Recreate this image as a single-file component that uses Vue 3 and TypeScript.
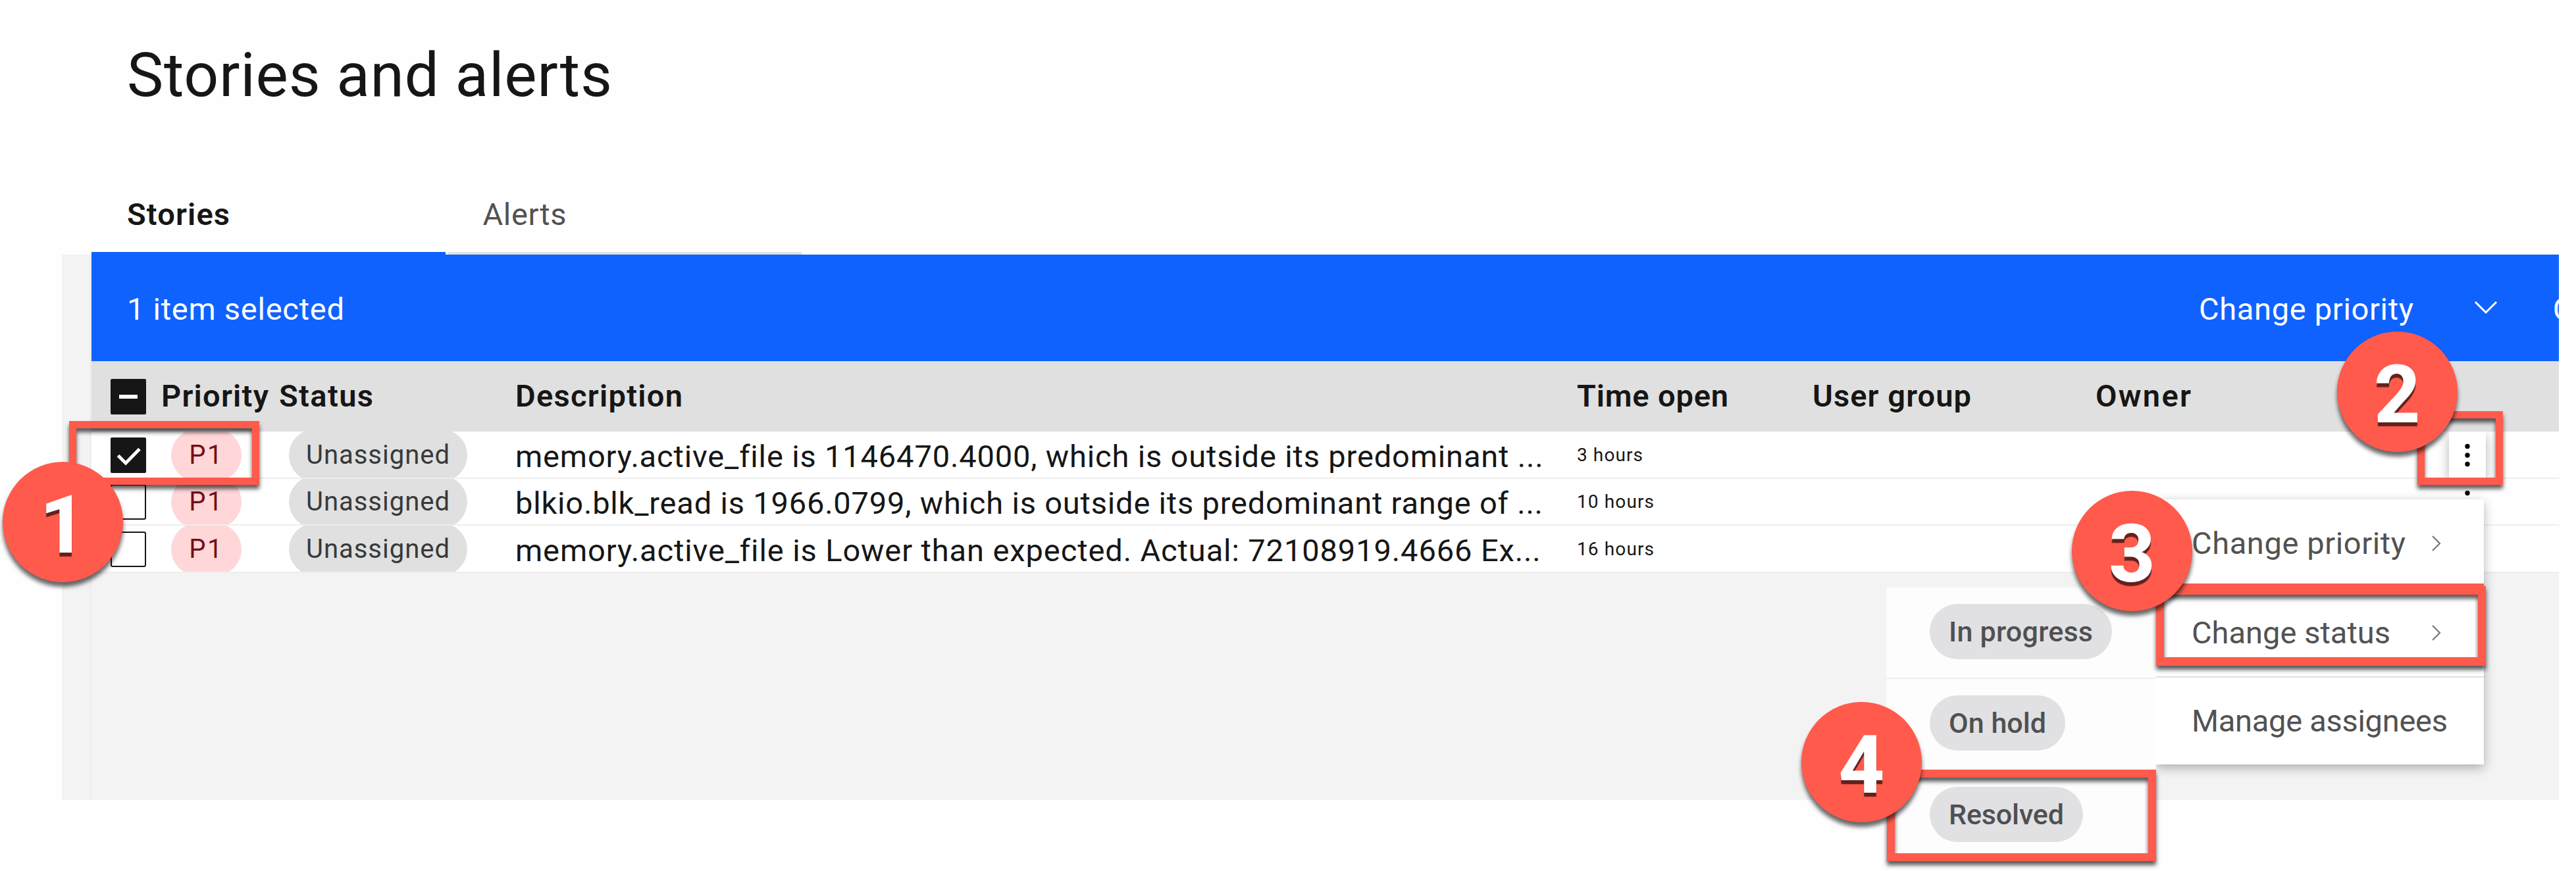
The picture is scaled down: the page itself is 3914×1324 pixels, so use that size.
<script setup lang="ts">
import { onMounted, ref } from 'vue'

interface Story {
  checked: boolean
  description: string
  descriptionWidth: number
  open: string
  openWidth: number
}

const headers = [
  { label: 'Priority', width: 163 },
  { label: 'Status', width: 143 },
  { label: 'Description', width: 254 },
  { label: 'Time open', width: 230 },
  { label: 'User group', width: 241 },
  { label: 'Owner', width: 145 },
]

const stories: Story[] = [
  { checked: true, description: 'memory.active_file is 1146470.4000, which is outside its predominant ...', descriptionWidth: 1560, open: '3 hours', openWidth: 100 },
  { checked: false, description: 'blkio.blk_read is 1966.0799, which is outside its predominant range of ...', descriptionWidth: 1561, open: '10 hours', openWidth: 117 },
  { checked: false, description: 'memory.active_file is Lower than expected. Actual: 72108919.4666 Ex...', descriptionWidth: 1556, open: '16 hours', openWidth: 117 },
]

const menuItems = [
  { label: 'Change priority', width: 325, submenu: true },
  { label: 'Change status', width: 302, submenu: true },
  { label: 'Manage assignees', width: 389, submenu: false },
]

const statuses = [
  { label: 'In progress', width: 219 },
  { label: 'On hold', width: 148 },
  { label: 'Resolved', width: 175 },
]

const root = ref<HTMLElement | null>(null)

onMounted(() => {
  root.value?.querySelectorAll<HTMLElement>('[data-w]').forEach((el) => {
    const chars = (el.textContent ?? '').length
    const natural = el.getBoundingClientRect().width
    const target = Number(el.dataset.w)
    if (chars > 1) el.style.letterSpacing = `${(target - natural) / (chars - 1)}px`
  })
})
</script>

<template>
  <div ref="root" class="page">
    <h1 class="title"><span class="fit" data-w="737">Stories and alerts</span></h1>

    <nav class="tabs">
      <div class="tab active"><span class="fit" data-w="156">Stories</span></div>
      <div class="tab"><span class="fit" data-w="127">Alerts</span></div>
    </nav>

    <section class="panel">
      <div class="batch">
        <span class="fit" data-w="330">1 item selected</span>
        <div class="batch-actions">
          <span class="fit" data-w="326">Change priority</span>
          <svg class="caret" width="36" height="22" viewBox="0 0 36 22"><path d="M2 2 18 18 34 2" fill="none" stroke="#fff" stroke-width="3" /></svg>
          <span class="next-action">C</span>
        </div>
      </div>

      <div class="row head">
        <div class="cell check">
          <svg width="54" height="54" viewBox="0 0 54 54"><rect width="54" height="54" rx="2" fill="#161616" /><rect x="13" y="24" width="28" height="6" fill="#fff" /></svg>
        </div>
        <div v-for="h in headers" :key="h.label" class="cell"><span class="fit" :data-w="h.width">{{ h.label }}</span></div>
      </div>

      <div v-for="(s, i) in stories" :key="i" class="row story">
        <div class="cell check">
          <svg v-if="s.checked" width="54" height="54" viewBox="0 0 54 54"><rect width="54" height="54" rx="2" fill="#161616" /><path d="M11.500 27.500 23 39 44 17.500" fill="none" stroke="#fff" stroke-width="5" /></svg>
          <svg v-else width="54" height="54" viewBox="0 0 54 54"><rect x="1" y="1" width="52" height="52" rx="2" fill="#fff" stroke="#161616" stroke-width="2" /></svg>
        </div>
        <div class="cell"><div class="tag p1"><span class="fit" data-w="50">P1</span></div></div>
        <div class="cell"><div class="tag unassigned"><span class="fit" data-w="218">Unassigned</span></div></div>
        <div class="cell desc"><span class="fit" :data-w="s.descriptionWidth">{{ s.description }}</span></div>
        <div class="cell time"><span class="fit" :data-w="s.openWidth">{{ s.open }}</span></div>
        <div class="cell"></div>
        <div class="cell"></div>
        <div class="cell more" :class="{ open: s.checked }">
          <svg width="56" height="40" viewBox="0 0 56 40"><circle cx="28" cy="6.500" r="3.700" /><circle cx="28" cy="20" r="3.700" /><circle cx="28" cy="33.500" r="3.700" /></svg>
        </div>
      </div>
    </section>

    <div class="menu">
      <div v-for="m in menuItems" :key="m.label" class="menu-item">
        <span class="fit" :data-w="m.width">{{ m.label }}</span>
        <svg v-if="m.submenu" class="chevron" width="16" height="26" viewBox="0 0 16 26"><path d="M2 2 13 13 2 24" fill="none" stroke="#777" stroke-width="2.200" /></svg>
      </div>
    </div>

    <div class="statuses">
      <div v-for="s in statuses" :key="s.label" class="status-item">
        <div class="status-tag"><span class="fit" :data-w="s.width">{{ s.label }}</span></div>
      </div>
    </div>

    <div class="mark mark-1"></div>
    <div class="mark mark-2"></div>
    <div class="mark mark-3"></div>
    <div class="mark mark-4"></div>
    <div v-for="n in 4" :key="n" class="badge" :class="`badge-${n}`">{{ n }}</div>
  </div>
</template>

<style>
body {
  margin: 0;
  background: #fefefe;
}
</style>

<style scoped>
.page {
  position: relative;
  width: 3914px;
  height: 1324px;
  overflow: hidden;
  box-sizing: border-box;
  padding-top: 60px;
  background: #fefefe;
  color: #161616;
  font-family: Roboto, "Liberation Sans", sans-serif;
  font-size: 47px;
  line-height: 60px;
}
.fit {
  display: inline-block;
  white-space: pre;
}
.title {
  margin: 0 0 99px 193px;
  font-size: 93px;
  font-weight: 400;
  line-height: 109px;
  height: 110px;
}
.tabs {
  display: flex;
  gap: 4px;
  margin-left: 139px;
}
.tab {
  box-sizing: border-box;
  width: 537.500px;
  height: 118px;
  padding-left: 53px;
  border-bottom: 4px solid #e0e0e0;
  line-height: 113px;
  color: #525252;
}
.tab.active {
  padding-left: 54px;
  border-color: #0f62fe;
  color: #161616;
  font-weight: 600;
}
.panel {
  box-sizing: border-box;
  width: 3794px;
  height: 829px;
  margin-left: 94px;
  padding-left: 45px;
  background: linear-gradient(to right, #f3f3f3 42px, #eeeeee 42px, #eeeeee 45px, #f3f3f3 45px);
}
.batch {
  display: flex;
  align-items: center;
  justify-content: space-between;
  box-sizing: border-box;
  height: 162px;
  padding: 3px 0 0 54px;
  overflow: hidden;
  background: #0f62fe;
  color: #fff;
}
.batch-actions {
  display: flex;
  align-items: center;
  width: 547px;
}
.caret {
  flex: none;
  margin: -3px 0 0 91px;
}
.next-action {
  flex: none;
  margin-left: 84px;
  white-space: nowrap;
}
.row {
  display: grid;
  grid-template-columns: 106px 179px 359px 1613px 358px 430px 537px 56px 111px;
  box-sizing: border-box;
  overflow: hidden;
}
.cell {
  display: flex;
  align-items: center;
  min-width: 0;
}
.head {
  height: 107px;
  background: #e0e0e0;
  font-weight: 600;
}
.head span {
  margin-top: -2px;
}
.story {
  height: 71.600px;
  border-bottom: 2px solid #eeeeee;
  background: #fff;
}
.check {
  padding-left: 29px;
}
.tag {
  display: flex;
  flex: none;
  align-items: center;
  justify-content: center;
  height: 80px;
  margin-left: 15px;
  border-radius: 40px;
  font-size: 40px;
}
.story .cell {
  height: 71px;
}
.p1 {
  width: 107px;
  background: #ffd7d9;
  color: #750e13;
}
.unassigned {
  width: 271px;
  background: #e0e0e0;
  color: #393939;
}
.desc span {
  margin-top: 4px;
}
.time {
  font-size: 28px;
}
.more svg {
  display: block;
}
.more.open {
  background: #fff;
  box-shadow: 0 6px 16px rgba(0, 0, 0, 0.3);
}
.menu {
  position: absolute;
  left: 3276px;
  top: 759px;
  width: 498px;
  background: #fff;
  box-shadow: 0 5px 16px rgba(0, 0, 0, 0.3);
  color: #525252;
}
.menu-item {
  display: flex;
  align-items: center;
  justify-content: space-between;
  box-sizing: border-box;
  height: 134.400px;
  padding: 0 64px 0 54px;
}
.menu-item + .menu-item {
  border-top: 2px solid #e0e0e0;
}
.statuses {
  position: absolute;
  left: 2866px;
  top: 893px;
  width: 410px;
  background: #fdfdfd;
}
.status-item {
  display: flex;
  align-items: center;
  box-sizing: border-box;
  height: 139px;
  padding: 0 0 4px 66px;
  border-bottom: 2px solid #eeeeee;
}
.status-tag {
  height: 84px;
  padding: 0 29px 0 29px;
  border-radius: 42px;
  background: #e1e1e3;
  color: #505052;
  font-size: 43px;
  font-weight: 500;
  line-height: 84px;
}
.mark {
  position: absolute;
  box-sizing: border-box;
  border: 11px solid #ff5a4c;
  filter: drop-shadow(0 6px 3px rgba(0, 0, 0, 0.65));
}
.mark-1 {
  left: 105px;
  top: 640px;
  width: 289px;
  height: 97px;
}
.mark-2 {
  left: 3673px;
  top: 625px;
  width: 130px;
  height: 112px;
}
.mark-3 {
  left: 3276px;
  top: 891px;
  width: 501px;
  height: 121px;
  border-width: 13px 12px;
}
.mark-3::before {
  position: absolute;
  left: -12px;
  top: -17px;
  width: 498px;
  height: 10px;
  background: #ff5a4c;
  content: "";
}
.mark-4 {
  left: 2867px;
  top: 1170px;
  width: 409px;
  height: 139px;
  border-width: 12px;
}
.badge {
  position: absolute;
  width: 183px;
  height: 183px;
  border-radius: 50%;
  background: #ff5a4c;
  box-shadow: 0 7px 6px rgba(0, 0, 0, 0.6);
  color: #fff;
  font: 800 122px/193px Roboto, "Liberation Sans", sans-serif;
  text-align: center;
  text-shadow: 0 6px 1px rgba(0, 0, 0, 0.62);
}
.badge-1 {
  left: 4px;
  top: 702px;
}
.badge-2 {
  left: 3551px;
  top: 504px;
}
.badge-3 {
  left: 3148px;
  top: 746px;
}
.badge-4 {
  left: 2737px;
  top: 1067px;
}
</style>
